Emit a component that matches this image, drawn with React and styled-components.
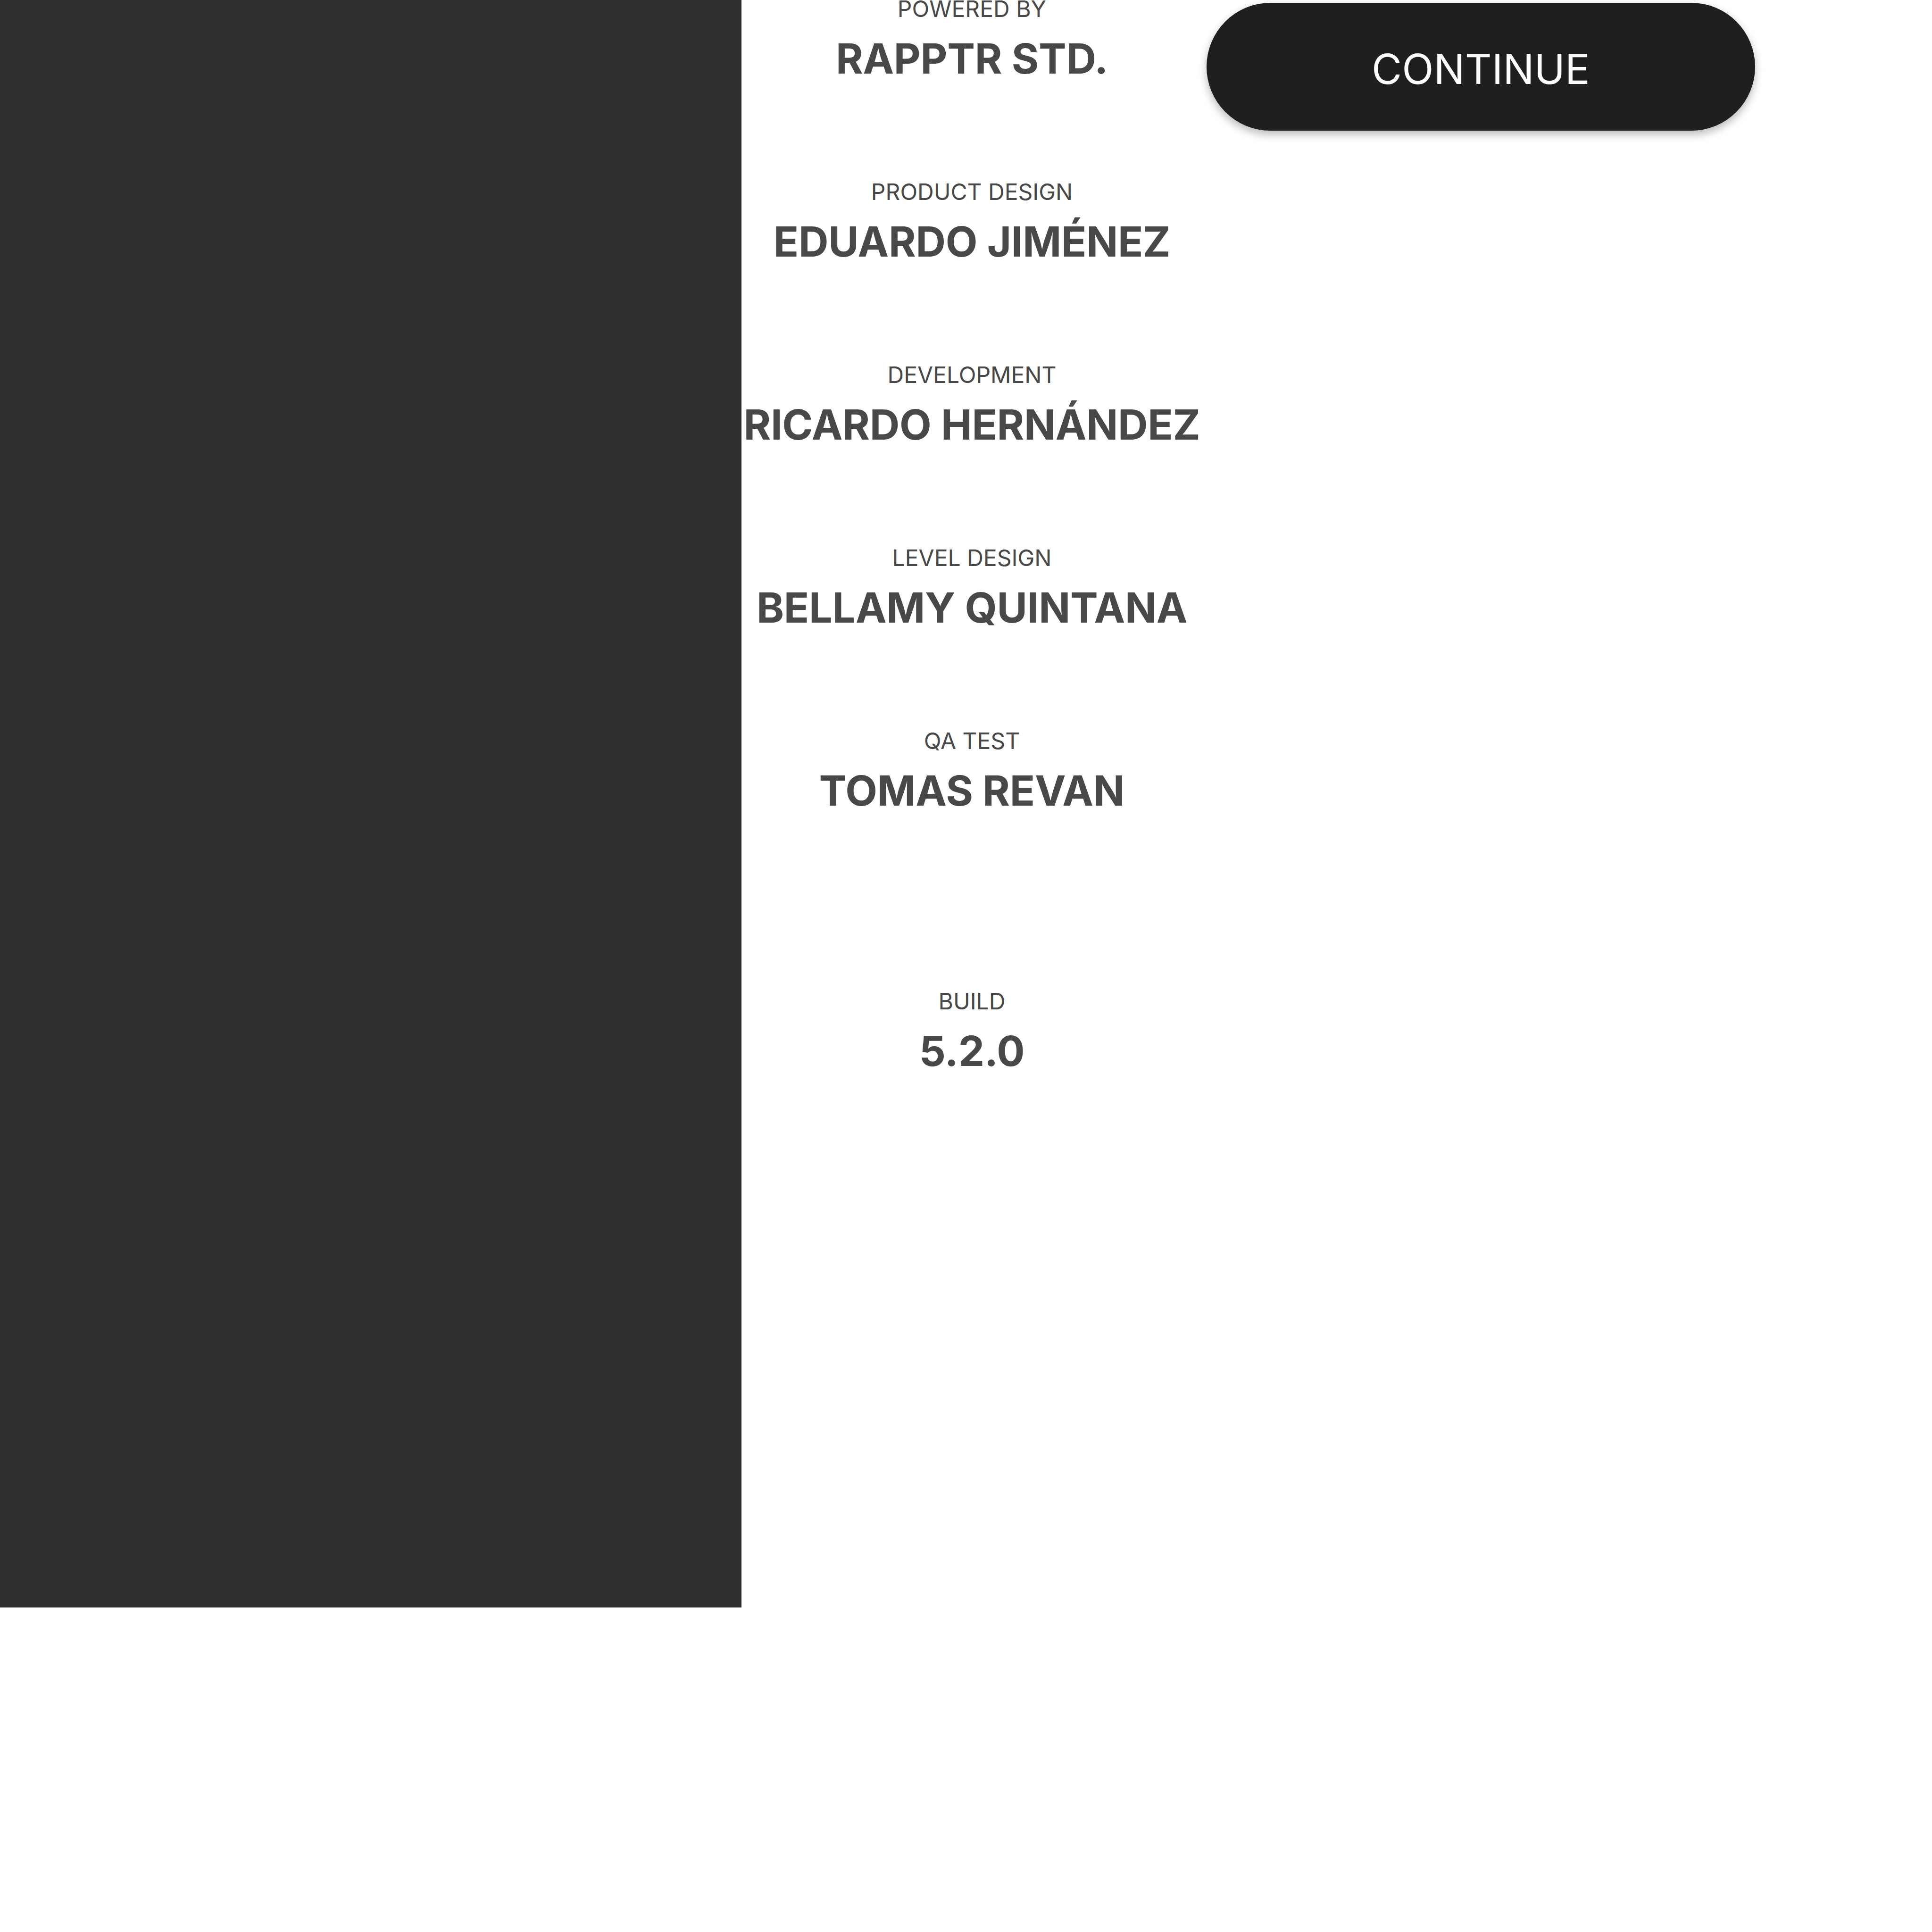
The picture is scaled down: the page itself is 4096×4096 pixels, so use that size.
import React from "react";
import styled, { createGlobalStyle } from "styled-components";

const GlobalStyle = createGlobalStyle`
  html, body {
    margin: 0;
    padding: 0;
    background: #ffffff;
  }
  body {
    font-family: Inter, "Noto Sans", sans-serif;
  }
`;

const credits = [
  { role: "POWERED BY", name: "RAPPTR STD." },
  { role: "PRODUCT DESIGN", name: "EDUARDO JIMÉNEZ" },
  { role: "DEVELOPMENT", name: "RICARDO HERNÁNDEZ" },
  { role: "LEVEL DESIGN", name: "BELLAMY QUINTANA" },
  { role: "QA TEST", name: "TOMAS REVAN" },
  { role: "BUILD", name: "5.2.0", spaced: true },
];

function App() {
  return (
    <>
      <GlobalStyle />
      <Screen>
        <Sidebar />
        <Credits>
          {credits.map((c) => (
            <CreditBlock key={c.role} $spaced={c.spaced}>
              <Role>{c.role}</Role>
              <Name>{c.name}</Name>
            </CreditBlock>
          ))}
        </Credits>
        <ContinueButton>CONTINUE</ContinueButton>
      </Screen>
    </>
  );
}

export default App;

const Screen = styled.div`
  display: flex;
  align-items: flex-start;
  width: 4096px;
  height: 4096px;
  background: #ffffff;
  overflow: hidden;
`;

const Sidebar = styled.div`
  flex-shrink: 0;
  width: 1572px;
  height: 3408px;
  background-color: #302e2f;
`;

const Credits = styled.div`
  flex-shrink: 0;
  width: 977px;
  margin-top: -5px;
  display: flex;
  flex-direction: column;
  align-items: center;
  text-align: center;
  white-space: nowrap;
  color: #484848;
`;

const CreditBlock = styled.div`
  display: flex;
  flex-direction: column;
  align-items: center;
  gap: 37px;
  margin-top: ${(p) => (p.$spaced ? "379px" : "215px")};

  &:first-child {
    margin-top: 0;
  }
`;

const Role = styled.div`
  font-size: 48px;
  line-height: 48px;
  font-weight: 400;
`;

const Name = styled.div`
  font-size: 88px;
  line-height: 88px;
  font-weight: 700;
  letter-spacing: -0.3px;
`;

const ContinueButton = styled.div`
  flex-shrink: 0;
  display: flex;
  align-items: center;
  justify-content: center;
  box-sizing: border-box;
  width: 1163px;
  height: 271px;
  margin-top: 6px;
  margin-left: 9px;
  padding-top: 8px;
  border-radius: 136px;
  background-color: #1f1f1f;
  color: #ffffff;
  font-size: 88px;
  line-height: 88px;
  font-weight: 400;
  box-shadow: 0 8px 18px rgba(0, 0, 0, 0.28);
`;
